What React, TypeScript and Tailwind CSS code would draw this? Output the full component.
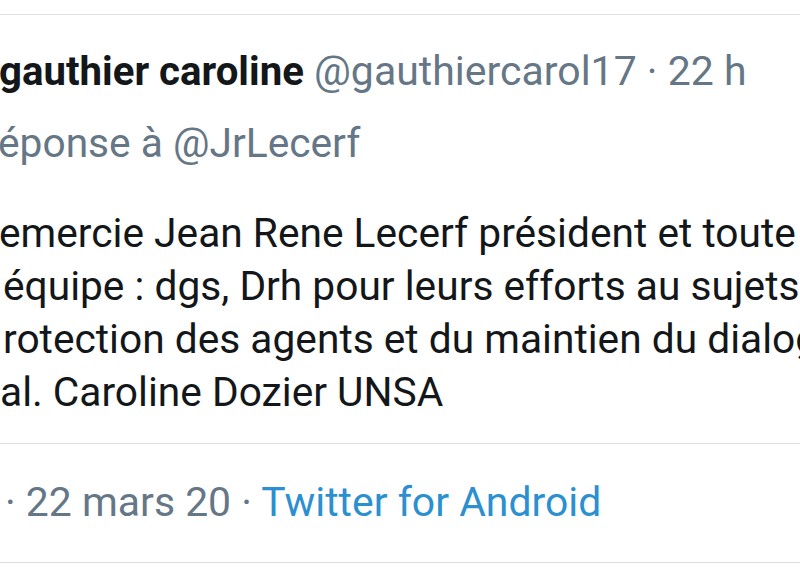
export default function App() {
  return (
    <div className="h-[567px] w-[800px] overflow-hidden bg-white font-['Roboto',sans-serif] text-[40.7px] leading-[53px] whitespace-nowrap">
      <div className="mt-[14px] border-t border-[#dcdfe2] pt-[30px]">
        <div className="-ml-[1px]">
          <span className="text-[40.2px] font-bold text-[#14171a]">gauthier caroline</span>
          <span className="text-[41px] text-[#657786]"> @gauthiercarol17 · 22 h</span>
        </div>
        <div className="mt-[19px] -ml-[2px] text-[#657786]">éponse à @JrLecerf</div>
        <div className="mt-[37px] text-[#14171a]">
          <div className="-ml-[1px]">emercie Jean Rene Lecerf président et toute</div>
          <div className="pl-[3px]">équipe : dgs, Drh pour leurs efforts au sujets</div>
          <div className="pl-[3px]">rotection des agents et du maintien du dialogue</div>
          <div className="pl-0">al. Caroline Dozier UNSA</div>
        </div>
      </div>
      <div className="mt-[24px] border-t border-b border-[#dcdfe2] pt-[32px] pb-[33px] text-[40.9px] text-[#657786]">
        <div className="pl-[5px]">
          · 22 mars 20 · <span className="text-[#2b8fd0]">Twitter for Android</span>
        </div>
      </div>
    </div>
  );
}
